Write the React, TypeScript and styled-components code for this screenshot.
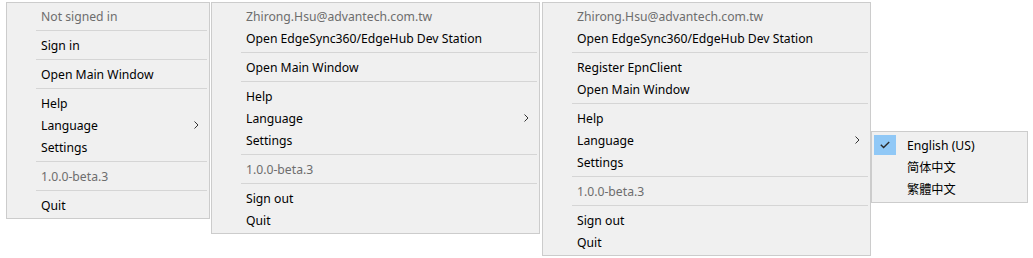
import React from 'react';
import styled, {createGlobalStyle} from 'styled-components';

const GlobalStyle = createGlobalStyle`
  html, body {
    margin: 0;
    padding: 0;
    background: #ffffff;
  }
  body {
    font-family: "Noto Sans", "Noto Sans CJK TC", sans-serif;
    font-size: 12.2px;
    color: #000;
  }
`;

const Stage = styled.div`
  display: flex;
  align-items: flex-start;
  padding: 2px 0 0 6px;
`;

const Menu = styled.div<{$width: number; $gapLeft?: number}>`
  position: relative;
  box-sizing: border-box;
  width: ${(p) => p.$width}px;
  margin-left: ${(p) => p.$gapLeft ?? 0}px;
  padding: 2px;
  background: #f0f0f0;
  border: 1px solid #cccccc;
  display: flex;
  flex-direction: column;
`;

const Row = styled.div<{$muted?: boolean}>`
  position: relative;
  display: flex;
  align-items: center;
  height: 22px;
  padding: 0 8px 0 32px;
  color: ${(p) => (p.$muted ? '#6d6d6d' : '#000000')};
  white-space: nowrap;

  .label {
    flex: 1;
  }
`;

const Separator = styled.div`
  height: 1px;
  margin: 3px 0 3px 27px;
  background: #d5d5d5;
`;

// the open submenu hangs off the Language row, over the page
const SubMenu = styled.div`
  position: absolute;
  top: 2px;
  left: calc(100% + 3px);
  box-sizing: border-box;
  width: 157px;
  padding: 2px;
  background: #f0f0f0;
  border: 1px solid #cccccc;
  font-family: "Noto Sans", "Noto Sans CJK TC", sans-serif;
`;

const SubRow = styled.div`
  display: flex;
  align-items: center;
  height: 22px;
  white-space: nowrap;
`;

const CheckCell = styled.div<{$on?: boolean}>`
  width: 22px;
  height: 20px;
  margin-right: 11px;
  display: flex;
  align-items: center;
  justify-content: center;
  background: ${(p) => (p.$on ? '#90c8f6' : 'transparent')};
`;

type Entry =
  | {kind: 'item'; label: string; muted?: boolean; sub?: boolean}
  | {kind: 'sep'};

const item = (label: string, opts: {muted?: boolean; sub?: boolean} = {}): Entry => ({
  kind: 'item',
  label,
  ...opts,
});
const sep: Entry = {kind: 'sep'};

const EMAIL = 'Zhirong.Hsu@advantech.com.tw';
const VERSION = '1.0.0-beta.3';
const STATION = 'Open EdgeSync360/EdgeHub Dev Station';

const menus: {width: number; gapLeft: number; entries: Entry[]; open?: boolean}[] = [
  {
    width: 204,
    gapLeft: 0,
    entries: [
      item('Not signed in', {muted: true}),
      sep,
      item('Sign in'),
      sep,
      item('Open Main Window'),
      sep,
      item('Help'),
      item('Language', {sub: true}),
      item('Settings'),
      sep,
      item(VERSION, {muted: true}),
      sep,
      item('Quit'),
    ],
  },
  {
    width: 329,
    gapLeft: 1,
    entries: [
      item(EMAIL, {muted: true}),
      item(STATION),
      sep,
      item('Open Main Window'),
      sep,
      item('Help'),
      item('Language', {sub: true}),
      item('Settings'),
      sep,
      item(VERSION, {muted: true}),
      sep,
      item('Sign out'),
      item('Quit'),
    ],
  },
  {
    width: 329,
    gapLeft: 2,
    open: true,
    entries: [
      item(EMAIL, {muted: true}),
      item(STATION),
      sep,
      item('Register EpnClient'),
      item('Open Main Window'),
      sep,
      item('Help'),
      item('Language', {sub: true}),
      item('Settings'),
      sep,
      item(VERSION, {muted: true}),
      sep,
      item('Sign out'),
      item('Quit'),
    ],
  },
];

const languages = ['English (US)', '简体中文', '繁體中文'];

function Chevron() {
  return (
    <svg width="5" height="8" viewBox="0 0 5 8">
      <path d="M0.5 0.5 L4 4 L0.5 7.5" fill="none" stroke="#333" strokeWidth="1" />
    </svg>
  );
}

function Check() {
  return (
    <svg width="10" height="8" viewBox="0 0 10 8">
      <path d="M0.8 3.8 L3.6 6.6 L9.2 1" fill="none" stroke="#2b2b2b" strokeWidth="1.4" />
    </svg>
  );
}

function LanguageMenu() {
  return (
    <SubMenu>
      {languages.map((lang, i) => (
        <SubRow key={lang}>
          <CheckCell $on={i === 0}>{i === 0 ? <Check /> : null}</CheckCell>
          <span>{lang}</span>
        </SubRow>
      ))}
    </SubMenu>
  );
}

export default function App() {
  return (
    <>
      <GlobalStyle />
      <Stage>
        {menus.map((menu, mi) => (
          <Menu key={mi} $width={menu.width} $gapLeft={menu.gapLeft}>
            {menu.entries.map((entry, i) =>
              entry.kind === 'sep' ? (
                <Separator key={i} />
              ) : (
                <Row key={i} $muted={entry.muted}>
                  <span className="label">{entry.label}</span>
                  {entry.sub ? <Chevron /> : null}
                  {entry.sub && menu.open ? <LanguageMenu /> : null}
                </Row>
              ),
            )}
          </Menu>
        ))}
      </Stage>
    </>
  );
}
